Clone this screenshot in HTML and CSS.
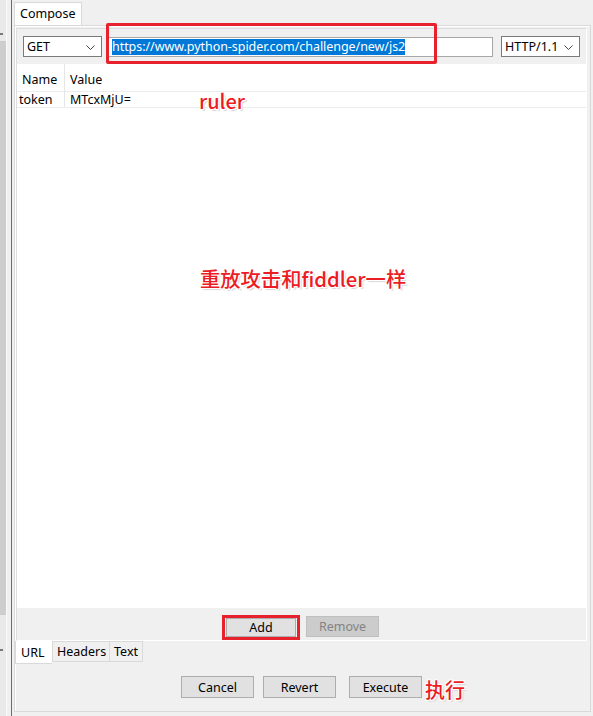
FILE: index.html
```html
<!DOCTYPE html>
<html>
<head>
<meta charset="utf-8">
<link rel="stylesheet" href="styles.css">
</head>
<body>
<div class="window">
  <div class="side">
    <div class="track">
      <div class="track-top"><span class="tick"></span></div>
      <div class="thumb"></div>
      <div class="track-bottom"><span class="tick low"></span></div>
    </div>
    <div class="sidegap"></div>
    <div class="splitter"></div>
  </div>
  <div class="main">
    <div class="tabs"><div class="tab active">Compose</div></div>
    <div class="panel">
      <div class="inner">
        <div class="reqbar">
          <div class="select method"><span>GET</span>
            <svg class="chev" width="9" height="5" viewBox="0 0 9 5"><path d="M0.5 0.5 L4.5 4.5 L8.5 0.5" fill="none" stroke="#444" stroke-width="1"/></svg>
          </div>
          <div class="url"><span class="selected">https://www.python-spider.com/challenge/new/js2</span></div>
          <div class="select ver"><span>HTTP/1.1</span>
            <svg class="chev" width="9" height="5" viewBox="0 0 9 5"><path d="M0.5 0.5 L4.5 4.5 L8.5 0.5" fill="none" stroke="#444" stroke-width="1"/></svg>
          </div>
        </div>
        <div class="grid">
          <div class="grow ghead"><div class="c1">Name</div><div class="c2">Value</div></div>
          <div class="grow gdata"><div class="c1">token</div><div class="c2">MTcxMjU=</div></div>
        </div>
        <div class="gridbtns">
          <button class="btn add">Add</button>
          <button class="btn disabled">Remove</button>
        </div>
      </div>
      <div class="subtabs">
        <div class="stab active">URL</div>
        <div class="stab">Headers</div>
        <div class="stab">Text</div>
      </div>
      <div class="actions">
        <button class="btn act">Cancel</button>
        <button class="btn act revert">Revert</button>
        <button class="btn act exec">Execute</button>
      </div>
    </div>
  </div>

  <div class="mark box-url"></div>
  <div class="mark box-add"></div>
  <div class="note note-ruler">ruler</div>
  <div class="note note-main">重放攻击和fiddler一样</div>
  <div class="note note-exec">执行</div>
</div>
</body>
</html>
```

FILE: styles.css
```css
* { box-sizing: border-box; }
html, body { margin: 0; padding: 0; }
body {
  background: #f0f0f0;
  font-family: "Noto Sans", "Noto Sans CJK SC", sans-serif;
  font-size: 12px;
  color: #000;
}
.window {
  position: relative;
  width: 593px;
  height: 716px;
  overflow: hidden;
  display: flex;
  background: #f0f0f0;
}
.side {
  display: flex;
  height: 716px;
}
.track {
  width: 6px;
  display: flex;
  flex-direction: column;
  background: #e9e9e9;
}
.track-top { height: 41px; position: relative; }
.thumb { height: 574px; background: #cdcdcd; }
.track-bottom { flex: 1; position: relative; }
.tick {
  position: absolute;
  left: 0;
  top: 33px;
  width: 3px;
  height: 2px;
  background: #777;
}
.tick.low { top: 34px; }
.sidegap {
  width: 5px;
  border-left: 1px solid #fafafa;
  background: #f0f0f0;
}
.splitter {
  width: 1px;
  background: #6b6b6b;
}
.main {
  flex: 1;
  display: flex;
  flex-direction: column;
  padding-left: 2px;
  padding-right: 2px;
}
.tabs {
  height: 25px;
  display: flex;
  align-items: flex-end;
}
.tab {
  height: 23px;
  padding: 0 6px 0 5px;
  width: 68px;
  line-height: 21px;
  font-size: 12.5px;
  border: 1px solid #d9d9d9;
  border-bottom: none;
  background: #fff;
}
.panel {
  height: 687px;
  border: 1px solid #d9d9d9;
  box-shadow: inset 1px 1px 0 #fff;
  display: flex;
  flex-direction: column;
  background: #f0f0f0;
}
.inner {
  margin: 2px 3px 0 1px;
  height: 613px;
  border: 1px solid #dedede;
  border-bottom-color: #fff;
  border-right-color: #fff;
  display: flex;
  flex-direction: column;
}
.reqbar {
  display: flex;
  align-items: center;
  padding: 7px 6px 7px 6px;
}
.select {
  width: 79px;
  height: 21px;
  border: 1px solid #7a7a7a;
  background: #fff;
  display: flex;
  align-items: center;
  justify-content: space-between;
  padding: 0 6px 0 3px;
  font-size: 12.5px;
}
.chev { display: block; margin-top: 1px; }
.url {
  margin: 0 8px 0 6px;
  width: 385px;
  height: 20px;
  border: 1px solid #a8a8a8;
  background: #fff;
  padding: 1px 3px;
  display: flex;
  align-items: center;
}
.selected {
  background: #0078d7;
  color: #fff;
  font-size: 12.5px;
  line-height: 16px;
  letter-spacing: -0.05px;
}
.grid {
  flex: 1;
  background: #fff;
}
.grow {
  display: flex;
  border-bottom: 1px solid #ececec;
}
.ghead { height: 28px; align-items: center; font-size: 12.5px; padding-top: 3px; }
.gdata { height: 16px; align-items: center; font-size: 12.5px; }
.ghead .c1 { margin-top: -3px; padding-top: 3px; height: 28px; }
.c1 {
  width: 48px;
  height: 100%;
  border-right: 1px solid #e6e6e6;
  display: flex;
  align-items: center;
}
.ghead .c1 { padding-left: 5px; }
.gdata .c1 { padding-left: 2px; }
.c2 { padding-left: 5px; }
.gridbtns {
  height: 32px;
  display: flex;
  justify-content: center;
  align-items: flex-start;
  gap: 10px;
  padding-top: 8px;
  padding-left: 2px;
}
.btn {
  font-family: "Noto Sans", "Noto Sans CJK SC", sans-serif;
  font-size: 12.5px;
  color: #000;
  background: #e1e1e1;
  border: 1px solid #adadad;
  height: 21px;
  padding: 0;
  line-height: 18px;
  width: 72px;
}
.btn.add { width: 70px; margin-top: 2px; height: 19px; }
.btn.disabled {
  width: 73px;
  background: #cccccc;
  border-color: #bfbfbf;
  color: #838383;
}
.subtabs {
  display: flex;
  height: 23px;
  align-items: flex-start;
}
.stab {
  height: 21px;
  line-height: 19px;
  padding: 0 3px;
  border: 1px solid #d9d9d9;
  margin-left: -1px;
  font-size: 12.5px;
  background: #f0f0f0;
}
.stab.active {
  margin-left: 0;
  height: 23px;
  line-height: 23px;
  background: #fff;
  width: 37px;
  padding-left: 5px;
  border-top: none;
  border-right: none;
}
.stab:nth-child(2) { width: 58px; padding-left: 4px; margin-left: 0; }
.stab:nth-child(3) { width: 34px; padding-left: 4px; }
.actions {
  display: flex;
  justify-content: center;
  padding-top: 12px;
  padding-right: 2px;
}
.btn.act { width: 73px; height: 22px; line-height: 19px; }
.btn.act.revert { margin-left: 9px; }
.btn.act.exec { margin-left: 13px; }

.mark {
  position: absolute;
  border: 3px solid #e8222c;
}
.box-url { left: 106px; top: 23px; width: 331px; height: 41px; border-radius: 2px; }
.box-add { left: 222px; top: 615px; width: 78px; height: 25px; }
.note {
  position: absolute;
  color: #ec1c24;
  font-family: "Noto Sans CJK SC", "Noto Sans", sans-serif;
  font-size: 20px;
  font-weight: 500;
  line-height: 1;
  text-shadow: 1px 1px 0 #fff, -1px -1px 0 #fff, 1px -1px 0 #fff, -1px 1px 0 #fff, 2px 2px 1px #d8d8d8;
  white-space: nowrap;
}
.note-ruler { left: 199px; top: 91px; }
.note-main { left: 200px; top: 268px; font-size: 20.3px; }
.note-exec { left: 425px; top: 680px; }
```
